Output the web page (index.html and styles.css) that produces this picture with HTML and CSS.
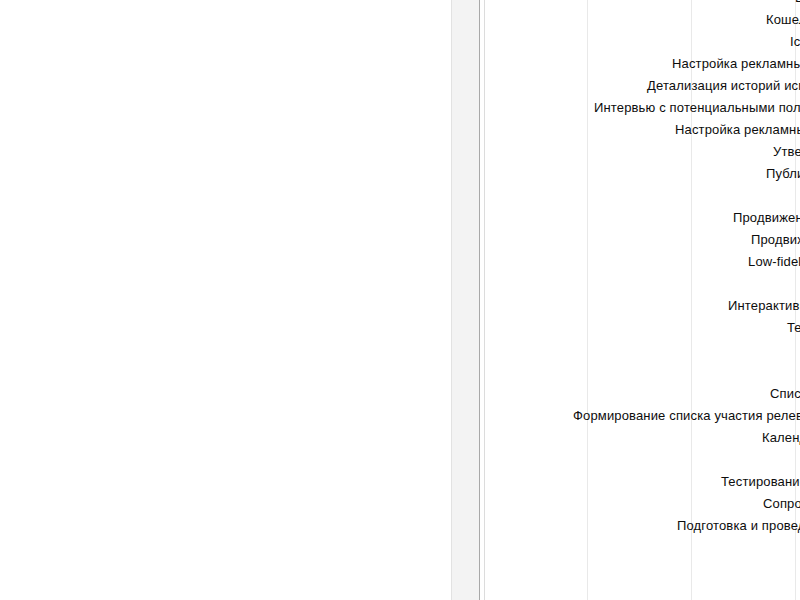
FILE: index.html
```html
<!DOCTYPE html>
<html lang="ru">
<head>
<meta charset="utf-8">
<title>Gantt</title>
<link rel="stylesheet" href="styles.css">
</head>
<body>
<div class="app">
  <div class="grid-panel"></div>
  <div class="splitter"></div>
  <div class="chart">
    <div class="columns">
      <div class="col col-pad"></div>
      <div class="col" style="width:103px"></div>
      <div class="col" style="width:104px"></div>
      <div class="col" style="width:104px"></div>
      <div class="col" style="width:104px"></div>
    </div>
    <div class="rows">
      <div class="row"><span class="label" style="margin-left:315px">Брендбук</span></div>
      <div class="row"><span class="label" style="margin-left:286px">Кошелёк лояльности</span></div>
      <div class="row"><span class="label" style="margin-left:310px">Icons set</span></div>
      <div class="row"><span class="label" style="margin-left:192px">Настройка рекламных кампаний</span></div>
      <div class="row"><span class="label" style="margin-left:167px">Детализация историй использования</span></div>
      <div class="row"><span class="label" style="margin-left:114px">Интервью с потенциальными пользователями</span></div>
      <div class="row"><span class="label" style="margin-left:195px">Настройка рекламных кампаний</span></div>
      <div class="row"><span class="label" style="margin-left:293px">Утверждение дизайна</span></div>
      <div class="row"><span class="label" style="margin-left:286px">Публикация приложения</span></div>
      <div class="row"></div>
      <div class="row"><span class="label" style="margin-left:253px">Продвижение в соцсетях</span></div>
      <div class="row"><span class="label" style="margin-left:271px">Продвижение в App Store</span></div>
      <div class="row"><span class="label" style="margin-left:268px">Low-fidelity прототип</span></div>
      <div class="row"></div>
      <div class="row"><span class="label" style="margin-left:248px">Интерактивный прототип</span></div>
      <div class="row"><span class="label" style="margin-left:307px">Тестирование</span></div>
      <div class="row"></div>
      <div class="row"></div>
      <div class="row"><span class="label" style="margin-left:290px">Список функций</span></div>
      <div class="row"><span class="label" style="margin-left:93px">Формирование списка участия релевантных партнёров</span></div>
      <div class="row"><span class="label" style="margin-left:282px">Календарный план</span></div>
      <div class="row"></div>
      <div class="row"><span class="label" style="margin-left:241px">Тестирование бета-версии</span></div>
      <div class="row"><span class="label" style="margin-left:283px">Сопровождение</span></div>
      <div class="row"><span class="label" style="margin-left:197px">Подготовка и проведение релиза</span></div>
      <div class="row"></div>
      <div class="row"></div>
      <div class="row"></div>
    </div>
  </div>
</div>
</body>
</html>
```
FILE: styles.css
```css
html, body {
  margin: 0;
  padding: 0;
  height: 100%;
  overflow: hidden;
  background: #ffffff;
}
body {
  font-family: "Liberation Sans", Arial, sans-serif;
  font-size: 13px;
  color: #0d0d0d;
}
.app {
  display: flex;
  height: 100vh;
  overflow: hidden;
}
.grid-panel {
  width: 451px;
  flex: none;
  border-right: 1px solid #e2e2e2;
  background: #ffffff;
}
.splitter {
  width: 27px;
  flex: none;
  background: #f3f3f3;
  border-right: 1px solid #a8a8a8;
}
.chart {
  flex: 1;
  min-width: 0;
  display: grid;
  overflow: hidden;
}
.columns,
.rows {
  grid-area: 1 / 1;
}
.columns {
  display: flex;
  height: 100%;
}
.col {
  flex: none;
  border-right: 1px solid #e9e9e9;
  box-sizing: border-box;
}
.col-pad {
  width: 5px;
  border-right-color: #dcdcdc;
}
.rows {
  margin-top: -13px;
  z-index: 1;
}
.row {
  height: 22px;
  line-height: 22px;
  white-space: nowrap;
}
.label {
  display: inline-block;
  letter-spacing: 0.15px;
}
```
